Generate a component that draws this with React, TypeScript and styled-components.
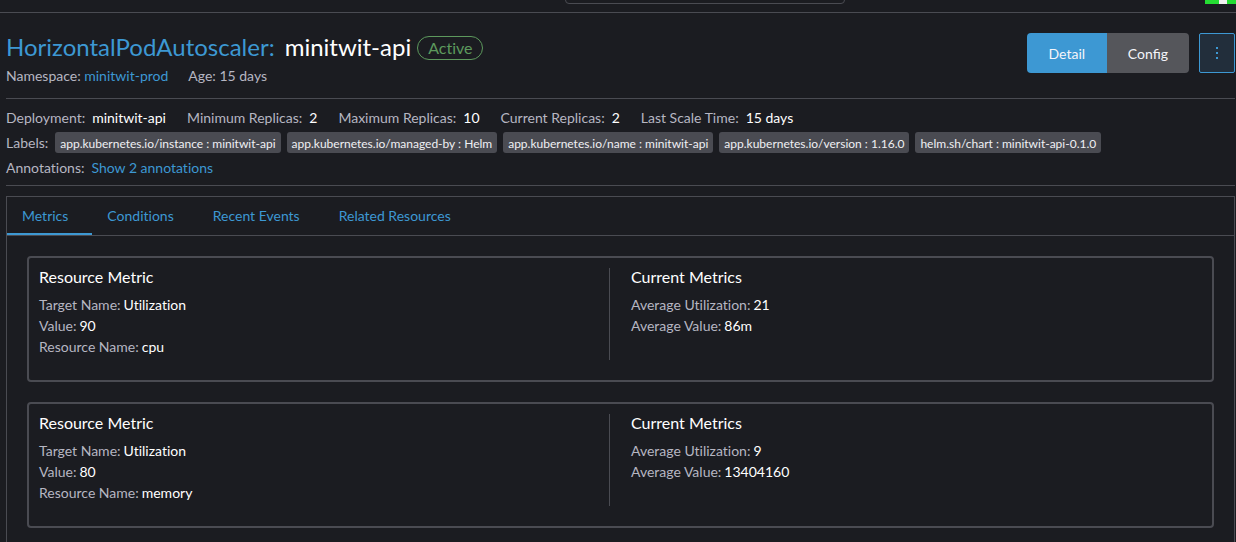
import React from "react";
import styled, { createGlobalStyle } from "styled-components";

const color = {
  body: "#1b1c21",
  border: "#4a4b52",
  text: "#ffffff",
  muted: "#b6b6c2",
  link: "#3d98d3",
  success: "#5d995d",
  chip: "#4a4b52",
};

const GlobalStyle = createGlobalStyle`
  *, *::before, *::after { box-sizing: border-box; }
  html { background: ${color.body}; }
  body {
    margin: 0;
    background: ${color.body};
    color: ${color.text};
    font-family: Lato, "Liberation Sans", sans-serif;
    font-size: 14px;
    line-height: 21px;
    font-variant-ligatures: none;
    overflow: hidden;
  }
  h1, h2, p, dl, dd, ul { margin: 0; padding: 0; font-weight: 400; }
  ul { list-style: none; }
  button { font: inherit; cursor: pointer; }
`;

const Page = styled.div`
  min-height: 100vh;
  overflow: hidden;
`;

const TopBar = styled.header`
  display: grid;
  grid-template-columns: 1fr 280px 1fr;
  grid-template-rows: 4px;
  align-items: end;
  height: 13px;
  padding-left: 174px;
  border-bottom: 1px solid ${color.border};
  overflow: hidden;
`;

const ClusterFilter = styled.input`
  grid-column: 2;
  width: 100%;
  height: 40px;
  background: transparent;
  border: 1px solid ${color.border};
  border-radius: 4px;
`;

const Avatar = styled.svg`
  display: block;
  justify-self: end;
`;

const Main = styled.main`
  padding: 20px 1px 0 6px;
`;

const Masthead = styled.div`
  display: flex;
  justify-content: space-between;
  align-items: flex-start;
  height: 66px;
  border-bottom: 1px solid ${color.border};
`;

const TitleRow = styled.div`
  display: flex;
  align-items: center;
  gap: 6px;
  height: 28px;
`;

const Title = styled.h1`
  display: flex;
  gap: 10px;
  font-size: 24px;
  line-height: 28px;
`;

const Badge = styled.span`
  height: 24px;
  margin-top: 2px;
  padding: 0 10px;
  border: 1px solid ${color.success};
  border-radius: 12px;
  color: ${color.success};
  font-size: 16px;
  line-height: 22px;
`;

const Link = styled.a`
  color: ${color.link};
  text-decoration: none;
`;

const Subheader = styled.p`
  display: flex;
  gap: 20px;
  margin-top: 4px;
  color: ${color.muted};
`;

const Actions = styled.div`
  display: flex;
  gap: 10px;
`;

const ButtonGroup = styled.div`
  display: flex;
  border-radius: 4px;
  overflow: hidden;
`;

const ModeButton = styled.button<{ $active?: boolean }>`
  min-width: 80px;
  height: 40px;
  padding: 0 21px;
  border: 0;
  background: ${(p) => (p.$active ? color.link : "#55565b")};
  color: #f4f5fa;
  font-variant-ligatures: common-ligatures;
`;

const MenuButton = styled.button`
  display: flex;
  align-items: center;
  justify-content: center;
  width: 36px;
  height: 40px;
  padding: 0;
  background: #222e3b;
  border: 1px solid ${color.link};
  border-radius: 2px;
  color: ${color.link};
`;

const Details = styled.section`
  display: flex;
  flex-direction: column;
  gap: 4px;
  padding: 8px 0 7px;
  border-bottom: 1px solid ${color.border};
`;

const DetailList = styled.dl`
  display: flex;
  gap: 21px;
`;

const DetailItem = styled.div`
  display: flex;
  gap: 7px;
`;

const Term = styled.dt`
  color: ${color.muted};
`;

const Chips = styled.ul`
  display: flex;
  gap: 6px;
`;

const Chip = styled.li`
  padding: 2px 5px 0;
  border-radius: 3px;
  background: ${color.chip};
  font-size: 12px;
  line-height: 19px;
  color: #f0f0f4;
`;

const Tabbed = styled.section`
  margin-top: 10px;
  border: 1px solid ${color.border};
`;

const TabList = styled.div`
  display: flex;
  height: 39px;
  border-bottom: 1px solid ${color.border};
`;

const Tab = styled.button<{ $active?: boolean }>`
  padding: 0 24px 0 15px;
  border: 0;
  border-bottom: 2px solid ${(p) => (p.$active ? color.link : "transparent")};
  background: transparent;
  color: ${color.link};
`;

const Panel = styled.div`
  display: flex;
  flex-direction: column;
  gap: 20px;
  padding: 20px;
`;

const Card = styled.article`
  display: grid;
  grid-template-columns: 1fr 1fr;
  gap: 21px;
  padding: 10px 10px 20px;
  border: 2px solid ${color.border};
  border-radius: 4px;
`;

const Column = styled.div<{ $divided?: boolean }>`
  min-height: 92px;
  border-right: ${(p) => (p.$divided ? `1px solid ${color.border}` : "0")};
`;

const ColumnTitle = styled.h2`
  margin-bottom: 8px;
  font-size: 16px;
  line-height: 18px;
`;

const MetricRow = styled.div`
  display: flex;
  gap: 3px;
`;

type Pair = [string, string];

const details: Pair[] = [
  ["Deployment", "minitwit-api"],
  ["Minimum Replicas", "2"],
  ["Maximum Replicas", "10"],
  ["Current Replicas", "2"],
  ["Last Scale Time", "15 days"],
];

const labels = [
  "app.kubernetes.io/instance : minitwit-api",
  "app.kubernetes.io/managed-by : Helm",
  "app.kubernetes.io/name : minitwit-api",
  "app.kubernetes.io/version : 1.16.0",
  "helm.sh/chart : minitwit-api-0.1.0",
];

const tabs = ["Metrics", "Conditions", "Recent Events", "Related Resources"];

const metrics: { resource: Pair[]; current: Pair[] }[] = [
  {
    resource: [
      ["Target Name", "Utilization"],
      ["Value", "90"],
      ["Resource Name", "cpu"],
    ],
    current: [
      ["Average Utilization", "21"],
      ["Average Value", "86m"],
    ],
  },
  {
    resource: [
      ["Target Name", "Utilization"],
      ["Value", "80"],
      ["Resource Name", "memory"],
    ],
    current: [
      ["Average Utilization", "9"],
      ["Average Value", "13404160"],
    ],
  },
];

function MetricColumn({ title, rows, divided }: { title: string; rows: Pair[]; divided?: boolean }) {
  return (
    <Column $divided={divided}>
      <ColumnTitle>{title}</ColumnTitle>
      <dl>
        {rows.map(([name, value]) => (
          <MetricRow key={name}>
            <Term>{name}:</Term>
            <dd>{value}</dd>
          </MetricRow>
        ))}
      </dl>
    </Column>
  );
}

export default function App() {
  const [mode, setMode] = React.useState("Detail");
  const [tab, setTab] = React.useState("Metrics");

  return (
    <Page>
      <GlobalStyle />
      <TopBar>
        <ClusterFilter aria-label="Filter namespaces" />
        <Avatar width="31" height="4" viewBox="0 0 31 4" aria-hidden="true" shapeRendering="crispEdges">
          <rect width="31" height="4" fill="#25dc33" />
          <rect x="14" width="8" height="4" fill="#f0f0f0" />
        </Avatar>
      </TopBar>
      <Main>
        <Masthead>
          <div>
            <TitleRow>
              <Title>
                <Link href="#hpa">HorizontalPodAutoscaler:</Link>
                <span>minitwit-api</span>
              </Title>
              <Badge>Active</Badge>
            </TitleRow>
            <Subheader>
              <span>
                Namespace: <Link href="#namespace">minitwit-prod</Link>
              </span>
              <span>Age: 15 days</span>
            </Subheader>
          </div>
          <Actions>
            <ButtonGroup>
              {["Detail", "Config"].map((name) => (
                <ModeButton key={name} type="button" $active={mode === name} onClick={() => setMode(name)}>
                  {name}
                </ModeButton>
              ))}
            </ButtonGroup>
            <MenuButton type="button" aria-label="More actions">
              <svg width="4" height="14" viewBox="0 0 4 14" fill="currentColor" aria-hidden="true">
                <rect x="1" y="1" width="2" height="2" />
                <rect x="1" y="6" width="2" height="2" />
                <rect x="1" y="11" width="2" height="2" />
              </svg>
            </MenuButton>
          </Actions>
        </Masthead>

        <Details>
          <DetailList>
            {details.map(([name, value]) => (
              <DetailItem key={name}>
                <Term>{name}:</Term>
                <dd>{value}</dd>
              </DetailItem>
            ))}
          </DetailList>
          <DetailItem as="dl">
            <Term>Labels:</Term>
            <dd>
              <Chips>
                {labels.map((label) => (
                  <Chip key={label}>{label}</Chip>
                ))}
              </Chips>
            </dd>
          </DetailItem>
          <DetailItem as="dl">
            <Term>Annotations:</Term>
            <dd>
              <Link href="#annotations">Show 2 annotations</Link>
            </dd>
          </DetailItem>
        </Details>

        <Tabbed>
          <TabList role="tablist">
            {tabs.map((name) => (
              <Tab
                key={name}
                type="button"
                role="tab"
                aria-selected={tab === name}
                $active={tab === name}
                onClick={() => setTab(name)}
              >
                {name}
              </Tab>
            ))}
          </TabList>
          <Panel role="tabpanel">
            {metrics.map((metric, i) => (
              <Card key={i}>
                <MetricColumn title="Resource Metric" rows={metric.resource} divided />
                <MetricColumn title="Current Metrics" rows={metric.current} />
              </Card>
            ))}
          </Panel>
        </Tabbed>
      </Main>
    </Page>
  );
}
